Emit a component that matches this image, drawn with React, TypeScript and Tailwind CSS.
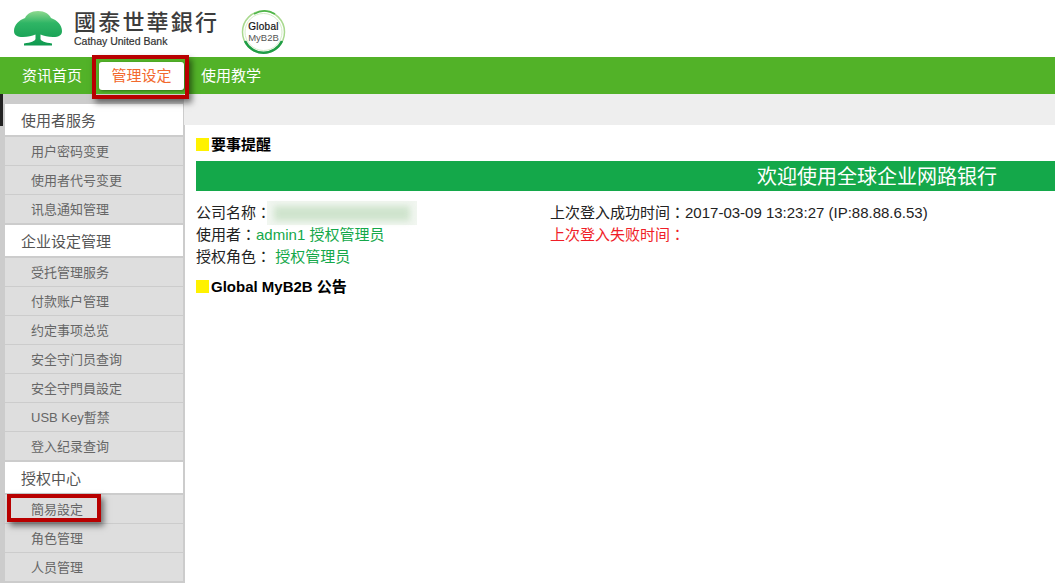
/**
 * Cathay United Bank - Global MyB2B home page
 */
import React from 'react'

const font = "font-['Liberation_Sans','Noto_Sans_CJK_SC',sans-serif]"

const menu = [
  { title: '使用者服务', items: ['用户密码变更', '使用者代号变更', '讯息通知管理'] },
  {
    title: '企业设定管理',
    items: ['受托管理服务', '付款账户管理', '约定事项总览', '安全守门员查询', '安全守門員設定', 'USB Key暫禁', '登入纪录查询'],
  },
  { title: '授权中心', items: ['簡易設定', '角色管理', '人员管理'] },
]

function TreeLogo() {
  return (
    <svg width="48" height="35" viewBox="0 0 48 35" className="shrink-0">
      <defs>
        <linearGradient id="tree" x1="0" y1="0" x2="0" y2="1">
          <stop offset="0" stopColor="#8fd98f" />
          <stop offset="0.35" stopColor="#2fb565" />
          <stop offset="1" stopColor="#0f9a50" />
        </linearGradient>
      </defs>
      <path
        d="M24 0C17 0 13 3 11 7C5 9 0 14 0 20C0 24 3 26 9 26C14 26 18 25 21.5 23.5L21.5 28C21 30 17 31.5 10 32.5L10 34.5L38 34.5L38 32.5C31 31.5 27 30 26.5 28L26.5 23.5C30 25 34 26 39 26C45 26 48 24 48 20C48 14 43 9 37 7C35 3 31 0 24 0Z"
        fill="url(#tree)"
      />
    </svg>
  )
}

function GlobalBadge() {
  return (
    <div className="relative w-[45px] h-[46px] flex flex-col items-center justify-center">
      <svg width="45" height="46" viewBox="0 0 45 46" className="absolute inset-0">
        <circle cx="22.5" cy="23" r="21" fill="none" stroke="#a9d98f" strokeWidth="1.5" />
        <path d="M4 32A20.5 20.5 0 0 0 41 32" fill="none" stroke="#1f9d46" strokeWidth="2.5" />
        <path d="M13 5A20.5 20.5 0 0 1 34 5" fill="none" stroke="#4fb54a" strokeWidth="1.5" />
        <circle cx="22.5" cy="23" r="18.5" fill="none" stroke="#d5ecc8" strokeWidth="1" />
      </svg>
      <span className="relative text-[10px] leading-[11px] text-[#111] tracking-[0.3px] [-webkit-text-stroke:0.2px_#111]">
        Global
      </span>
      <span className="relative text-[9.5px] leading-[11px] text-[#555]">MyB2B</span>
    </div>
  )
}

function Colon() {
  return <span className="font-['Noto_Sans_CJK_TC',sans-serif] leading-none">：</span>
}

function SquareTitle({ children }: { children: React.ReactNode }) {
  return (
    <div className="flex items-center h-[18px] gap-[2px] text-[15px] leading-[18px] font-bold text-black">
      <span className="w-[13px] h-[13px] bg-[#fff200] shrink-0" />
      <span className="mt-[2px]">{children}</span>
    </div>
  )
}

function Sidebar() {
  return (
    <aside className="w-[185px] shrink-0 bg-[#cccccc] pl-[5px] pr-[2px] pt-[10px] h-[489px] overflow-hidden">
      {menu.map((group) => (
        <div key={group.title}>
          <div className="h-[31px] bg-white pl-[16px] pt-[3px] flex items-center text-[15px] text-[#555]">
            {group.title}
          </div>
          <div className="pt-[2px] pb-[1px]">
            {group.items.map((item) => (
              <div
                key={item}
                className="h-[28px] mb-[1px] bg-[#dedede] pl-[26px] pt-[2px] flex items-center text-[13px] text-[#666]"
              >
                {item}
              </div>
            ))}
          </div>
        </div>
      ))}
    </aside>
  )
}

export default function App() {
  return (
    <div className={`${font} relative w-[1055px] h-[583px] overflow-hidden bg-white`}>
      {/* Header */}
      <header className="h-[57px] flex items-center pl-[14px]">
        <TreeLogo />
        <div className="ml-[12px] mt-[-2px] w-[154px]">
          <div className="h-[24px] text-[22px] leading-[24px] tracking-[2.2px] font-medium text-[#3c3c3c] font-['Noto_Sans_CJK_TC',sans-serif] whitespace-nowrap">
            國泰世華銀行
          </div>
          <div className="mt-[3px] text-[10.5px] leading-[13px] font-medium text-[#333] [-webkit-text-stroke:0.2px_#333] font-['Liberation_Sans',sans-serif]">
            Cathay United Bank
          </div>
        </div>
        <div className="ml-[13px] mt-[7px]">
          <GlobalBadge />
        </div>
      </header>

      {/* Nav */}
      <nav className="h-[37px] bg-[#52b228] flex items-center pl-[22px] pt-[1px] text-[15px] text-white">
        <span>资讯首页</span>
        <span className="ml-[17px] w-[85px] h-[28px] rounded-[3px] bg-white text-[#f26a2e] flex items-center justify-center shadow-[1px_1px_3px_rgba(0,0,0,0.4)]">
          管理设定
        </span>
        <span className="ml-[17px]">使用教学</span>
      </nav>

      <div className="flex relative">
        <Sidebar />
        <main className="flex-1 min-w-0">
          <div className="h-[31px] bg-[#eeeeee] ml-[-1px]" />
          <div className="pl-[11px] pt-[10px]">
            <SquareTitle>要事提醒</SquareTitle>
            <div className="mt-[8px] h-[30px] pt-[1px] bg-[#14a84a] text-white text-[20px] flex items-center justify-end pr-[58px]">
              欢迎使用全球企业网路银行
            </div>
            <div className="mt-[11px] flex text-[15px] leading-[22px] text-[#222]">
              <div className="w-[354px] shrink-0">
                <div className="flex items-center h-[22px]">
                  <span>
                    公司名称
                    <Colon />
                  </span>
                  <span className="w-[150px] h-[24px] bg-[#f1f6f0] flex items-center justify-center ml-[-4px]">
                    <span className="w-[136px] h-[15px] bg-[#cfe4cd] blur-[3px]" />
                  </span>
                </div>
                <div>
                  使用者
                  <Colon />
                  <span className="text-[#14a84a]">admin1 授权管理员</span>
                </div>
                <div>
                  授权角色
                  <Colon /> <span className="text-[#14a84a]">授权管理员</span>
                </div>
              </div>
              <div>
                <div>
                  上次登入成功时间
                  <Colon />
                  2017-03-09 13:23:27 (IP:88.88.6.53)
                </div>
                <div className="text-[#f01e28]">
                  上次登入失败时间
                  <Colon />
                </div>
              </div>
            </div>
            <div className="mt-[9px]">
              <SquareTitle>Global MyB2B 公告</SquareTitle>
            </div>
          </div>
        </main>
        {/* dark sliver beside the sidebar top */}
        <div className="absolute left-0 top-0 w-[3px] h-[32px] bg-[#222222]" />
      </div>

      {/* Red annotation boxes */}
      <div className="absolute left-[92px] top-[55px] w-[97px] h-[44px] border-[4px] border-[#b80000] shadow-[3px_4px_6px_rgba(0,0,0,0.5)]" />
      <div className="absolute left-[7px] top-[494px] w-[94px] h-[28px] border-[4px] border-[#b80000] shadow-[3px_4px_6px_rgba(0,0,0,0.5)]" />
    </div>
  )
}
